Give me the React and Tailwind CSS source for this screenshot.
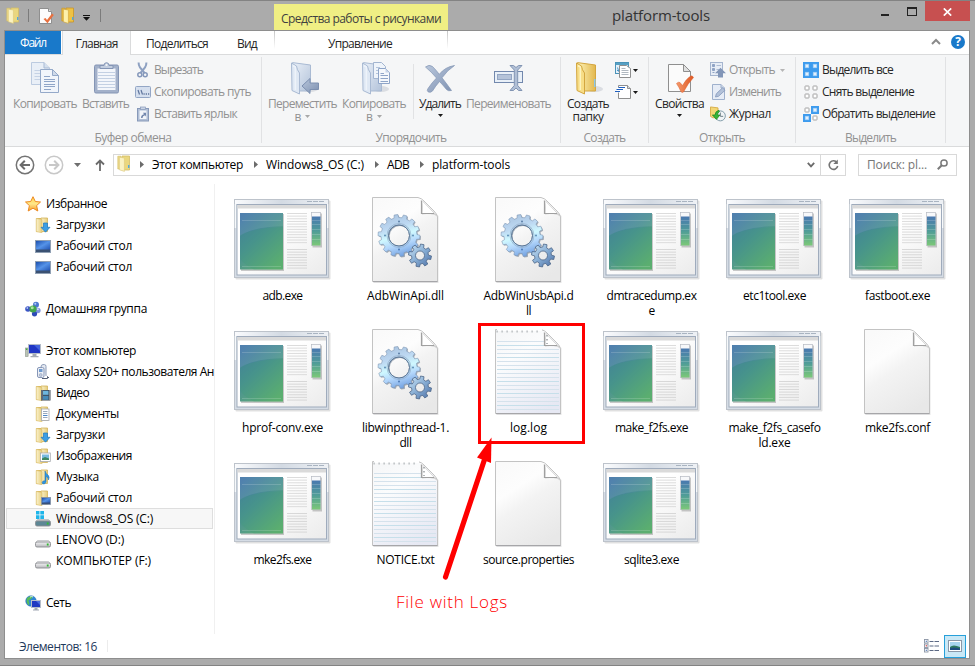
import { useLayoutEffect, useRef, useState } from "react";

/* Single-line text whose tracking is adjusted so that it spans `w` pixels. */
function T({ w, className = "", children }) {
  const ref = useRef(null);
  const [ls, setLs] = useState(0);
  useLayoutEffect(() => {
    if (!w) return;
    const natural = ref.current.getBoundingClientRect().width;
    setLs((w - natural) / String(children).length);
  }, []);
  return (
    <span ref={ref} className={"inline-block whitespace-nowrap " + className} style={{ letterSpacing: ls + "px" }}>
      {children}
    </span>
  );
}

/* ---------- icons ---------- */
function Defs() {
  return (
    <svg width="0" height="0" className="absolute">
      <defs>
        <linearGradient id="fold" x1="0" y1="0" x2="1" y2="0">
          <stop offset="0" stopColor="#fdf3b8" /><stop offset="1" stopColor="#e3b84e" />
        </linearGradient>
        <linearGradient id="foldPale" x1="0" y1="0" x2="1" y2="0">
          <stop offset="0" stopColor="#fbf3cf" /><stop offset="1" stopColor="#e6cd7c" />
        </linearGradient>
        <linearGradient id="foldBlue" x1="0" y1="0" x2="1" y2="1">
          <stop offset="0" stopColor="#eaf0f8" /><stop offset="1" stopColor="#b3c3da" />
        </linearGradient>
        <linearGradient id="steel" x1="0" y1="0" x2="1" y2="1">
          <stop offset="0" stopColor="#b9c7dc" /><stop offset="1" stopColor="#7d90b0" />
        </linearGradient>
        <linearGradient id="exeMain" x1="0.1" y1="0" x2="0.8" y2="1">
          <stop offset="0" stopColor="#4276a8" /><stop offset="0.45" stopColor="#4b9193" /><stop offset="1" stopColor="#66b56e" />
        </linearGradient>
        <linearGradient id="exeBar" x1="0" y1="0" x2="0" y2="1">
          <stop offset="0" stopColor="#4a78b0" /><stop offset="0.5" stopColor="#4f9c98" /><stop offset="1" stopColor="#7cc878" />
        </linearGradient>
        <linearGradient id="exeBg" x1="0" y1="0" x2="1" y2="1">
          <stop offset="0.4" stopColor="#ffffff" /><stop offset="1" stopColor="#ebebeb" />
        </linearGradient>
        <linearGradient id="exeFrame" x1="0" y1="0" x2="1" y2="0">
          <stop offset="0" stopColor="#fafbfd" /><stop offset="0.5" stopColor="#d3dae3" /><stop offset="1" stopColor="#eef1f5" />
        </linearGradient>
        <linearGradient id="page" x1="0.2" y1="0" x2="0.7" y2="1">
          <stop offset="0" stopColor="#fafafa" /><stop offset="0.3" stopColor="#fdfdfd" /><stop offset="0.5" stopColor="#f3f3f3" /><stop offset="1" stopColor="#e8e8e8" />
        </linearGradient>
        <linearGradient id="note" x1="0.2" y1="0" x2="0.7" y2="1">
          <stop offset="0" stopColor="#f6f7f8" /><stop offset="0.3" stopColor="#fbfcfd" /><stop offset="1" stopColor="#e6e8f3" />
        </linearGradient>
        <linearGradient id="gearA" x1="0.3" y1="0" x2="0.6" y2="1">
          <stop offset="0" stopColor="#aac4e0" /><stop offset="0.3" stopColor="#bdd8f2" /><stop offset="0.52" stopColor="#cff8ff" /><stop offset="0.72" stopColor="#b3d6fb" /><stop offset="1" stopColor="#6f9fe0" />
        </linearGradient>
        <linearGradient id="gearB" x1="0" y1="0" x2="1" y2="1">
          <stop offset="0" stopColor="#cfe8f8" /><stop offset="0.5" stopColor="#86acd3" /><stop offset="1" stopColor="#4c6fa5" />
        </linearGradient>
        <linearGradient id="screen" x1="0" y1="0" x2="1" y2="1">
          <stop offset="0" stopColor="#1c4fae" /><stop offset="0.5" stopColor="#5593e8" /><stop offset="1" stopColor="#2355b4" />
        </linearGradient>
        <linearGradient id="star" x1="0" y1="0" x2="0" y2="1">
          <stop offset="0" stopColor="#ffd24a" /><stop offset="0.5" stopColor="#ffe88a" /><stop offset="1" stopColor="#f79a2a" />
        </linearGradient>
        <linearGradient id="drive" x1="0" y1="0" x2="0" y2="1">
          <stop offset="0" stopColor="#f4f4f6" /><stop offset="1" stopColor="#b6b6ba" />
        </linearGradient>
        <linearGradient id="check" x1="0" y1="0" x2="1" y2="0">
          <stop offset="0" stopColor="#f59a6c" /><stop offset="1" stopColor="#dd5722" />
        </linearGradient>
      </defs>
    </svg>
  );
}

const FolderSmall = ({ children }) => (
  <svg width="16" height="16" viewBox="0 0 16 16" className="shrink-0">
    <path d="M1.5 1.5 H7 V14.5 H1.5z" fill="#f3dd93" stroke="#d9b960" />
    <path d="M6 1 H12.5 V14.5 H6z" fill="url(#foldPale)" stroke="#d3b259" strokeWidth="0.8" />
    <path d="M1.2 1.5 L7 2.5 V15.8 L1.2 14.6z" fill="url(#foldPale)" stroke="#dcc06c" strokeWidth="0.6" />
    {children}
  </svg>
);
const FolderTiny = ({ pale }) => (
  <svg width="14" height="17" viewBox="0 0 14 17" className="shrink-0">
    <path d="M5 1 H12.5 V15 H5z" fill={pale ? "#ead77f" : "#eec245"} stroke={pale ? "#d3bd67" : "#c8952a"} strokeWidth="0.8" />
    <path d="M0.8 1.2 H4 V14 H0.8z" fill={pale ? "#ecd98a" : "#e8b93d"} stroke={pale ? "#d3bd67" : "#c8952a"} strokeWidth="0.6" />
    <path d="M2.4 2.2 L7.4 3 V16.4 L2.4 14.8z" fill={pale ? "#faf2c3" : "#fdf0ab"} stroke={pale ? "#dcc877" : "#d0a23a"} strokeWidth="0.6" />
    <rect x="11" y="10" width="1.4" height="3" fill="#54a8e0" />
  </svg>
);
const TinyProps = () => (
  <svg width="15" height="16" viewBox="0 0 15 16" className="shrink-0">
    <path d="M0.5 0.5 H9.5 L12.5 3.5 V15.5 H0.5z" fill="#fcfcfc" stroke="#8f8f8f" />
    <path d="M9.5 0.5 V3.5 H12.5" fill="#ddd" stroke="#8f8f8f" />
    <path d="M4.5 11 L6.5 10 L8 12 L13 5.5 L14.8 7 L8.5 15.2z" fill="#e8703f" />
  </svg>
);
const Caret = ({ c = "#1a1a1a", className = "" }) => (
  <svg width="5" height="3" viewBox="0 0 5 3" className={"shrink-0 " + className}><path d="M0 0 H5 L2.5 3z" fill={c} /></svg>
);

const CopyBig = () => (
  <svg width="32" height="32" viewBox="0 0 32 32">
    <g stroke="#a9bbd5" fill="#f1f5fb">
      <path d="M2.5 0.5 H15 L20.5 6 V22.5 H2.5z" fill="#e9eff7" stroke="#bccbe0" />
      <path d="M15 0.5 V6 H20.5" fill="#d5e0ee" />
      <g stroke="#c5d2e5"><path d="M5.5 8.5 H11 M5.5 11.5 H11 M5.5 14.5 H11 M5.5 17.5 H11" /></g>
      <path d="M11.5 7.5 H23.5 L29.5 13.5 V30.5 H11.5z" stroke="#94a9c9" />
      <path d="M23.5 7.5 V13.5 H29.5z" fill="#cfdaea" stroke="#94a9c9" />
      <path d="M15 14.5 H21 M15 17.5 H26 M15 19.5 H26 M15 22.5 H26 M15 24.5 H26 M15 27.5 H22" stroke="#8fa5c8" />
    </g>
  </svg>
);
const PasteBig = () => (
  <svg width="32" height="32" viewBox="0 0 32 32">
    <rect x="4.5" y="3" width="24" height="28" rx="1.5" fill="#a3b1ca" stroke="#8495b5" />
    <rect x="7.5" y="6.5" width="18" height="21.5" fill="#f3f6fb" />
    <path d="M8 10.5 H25 M8 13.5 H25 M8 16.5 H25 M8 19.5 H25 M8 22.5 H25 M8 25.5 H25" stroke="#c3d0e3" />
    <path d="M10 6.5 V3.5 H14 Q14 0.7 16.5 0.7 T19 3.5 H23 V6.5z" fill="#c2cddf" stroke="#8495b5" />
    <circle cx="16.5" cy="3" r="1" fill="#f5f6f7" />
  </svg>
);
const BigFolder = ({ fill = "url(#foldBlue)", stroke = "#a9bad3", front = "#dfe8f4", hi = "#eef3fa", children }) => (
  <svg width="32" height="34" viewBox="0 0 32 34">
    <ellipse cx="23" cy="27" rx="8" ry="3" fill="#8a95a5" opacity="0.25" />
    <path d="M5.5 0.6 L23.5 3 V29 H9z" fill={fill} stroke={stroke} />
    <path d="M4.5 1 L9.5 4 Q10 8 12.5 11 V32 L5 28.5z" fill={front} stroke={stroke} />
    <path d="M6 3.5 L8.300 5 V28" stroke={hi} strokeWidth="1.5" fill="none" />
    {children}
  </svg>
);
const MoveBig = () => (
  <BigFolder><path d="M15 24 L23 16.500 V21 H31.500 V27.500 H23 V31.500z" fill="url(#steel)" stroke="#7d90b0" /></BigFolder>
);
const CopyToBig = () => (
  <BigFolder>
    <path d="M15.500 0.500 H23.500 L27.500 4.500 V16.500 H15.500z" fill="#eff4fa" stroke="#a3b5d0" />
    <path d="M18 5.500 H22 M18 8.500 H20 M18 11.500 H20" stroke="#b5c5dc" />
    <path d="M20.500 6.500 H27.500 L31.500 10.500 V21.500 H20.500z" fill="#f5f8fc" stroke="#8fa5c8" />
    <path d="M27.500 6.500 V10.500 H31.500z" fill="#c7d4e8" />
    <path d="M22.500 11.500 H26 M22.500 13.500 H30 M22.500 16.500 H30 M22.500 19.500 H30" stroke="#8fa5c8" />
  </BigFolder>
);
const DeleteBig = () => (
  <svg width="32" height="32" viewBox="0 0 32 32">
    <path d="M1.5 5 Q5 2 8.5 4.5 Q12 8 15.3 12.3 Q21 5 30.5 3.5 Q23 8.500 18 15.800 Q22.500 21.500 27.500 28.500 Q24.500 29.500 22.500 27.500 Q18.500 22.500 15.500 19.500 Q11.500 24 8.500 29 Q6.500 31.200 4 29.800 Q2.500 28.500 4 26.500 Q8 20.500 12.500 16 Q7.500 10 1.500 5z" fill="url(#steel)" stroke="#8295b3" strokeWidth="0.7" />
  </svg>
);
const RenameBig = () => (
  <svg width="32" height="32" viewBox="0 0 32 32">
    <rect x="1.500" y="9.500" width="28" height="11" fill="#e9f0f8" stroke="#7288ad" />
    <rect x="4.500" y="12.500" width="14" height="5" fill="#b5c3d9" stroke="#93a6c4" />
    <path d="M17 3.500 H20.500 L23 5.500 L25.500 3.500 H29 L24.700 8 V23.500 L29 28.500 H25.500 L23 26 L20.500 28.500 H17 L21.300 23.500 V8z" fill="#b0bfd6" stroke="#8295b3" />
  </svg>
);
const NewFolderBig = () => <BigFolder fill="url(#fold)" stroke="#d3a640" front="#f7dd86" hi="#fdf3c0"><rect x="22" y="17" width="1.500" height="8" fill="#8cc6e8" /></BigFolder>;
const PropsBig = () => (
  <svg width="32" height="32" viewBox="0 0 32 32">
    <path d="M4.500 2.500 H19.500 L26.500 9.500 V29.500 H4.500z" fill="#fbfbfb" stroke="#8f8f8f" />
    <path d="M19.500 2.500 V9.500 H26.500z" fill="#e0e0e0" stroke="#8f8f8f" />
    <path d="M12.500 21.500 Q14.500 19.500 16 20.500 L18.500 23.500 Q22 17 27 13.800 Q29 14 29.500 15.500 Q23.500 22 19.500 30 Q18.500 31 17 29.800 Q15 25 12.500 21.500z" fill="url(#check)" stroke="#dd6030" strokeWidth="0.500" />
  </svg>
);

const Cut = () => (
  <svg width="16" height="16" viewBox="0 0 16 16"><path d="M3.600 0.500 Q3.500 3 5 5.500 L9.500 11 M11.400 0.500 Q11.500 3 10 5.500 L5.500 11" stroke="#8ea1c2" strokeWidth="2" fill="none" />
    <circle cx="4.800" cy="12.800" r="2" fill="none" stroke="#8598bb" strokeWidth="1.500" /><circle cx="10.200" cy="12.800" r="2" fill="none" stroke="#8598bb" strokeWidth="1.500" /></svg>
);
const CopyPath = () => (
  <svg width="16" height="16" viewBox="0 0 16 16"><rect x="0.500" y="2.500" width="15" height="11" rx="1" fill="#d5dfee" stroke="#93a6c5" /><path d="M3 6 L4.500 10.500 M6 6 L7.500 10.500" stroke="#5f759d" strokeWidth="1.200" /><path d="M8.500 10 H9.700 M10.700 10 H12 M13 10 H14.200" stroke="#5f759d" strokeWidth="1.300" /></svg>
);
const PasteLink = () => (
  <svg width="16" height="16" viewBox="0 0 16 16"><rect x="2.500" y="2.500" width="11" height="12.500" fill="#b1bfd6" stroke="#8799b9" /><rect x="4.500" y="4.500" width="7" height="8.500" fill="#f2f5fa" /><rect x="5.500" y="1" width="5" height="2.500" fill="#c9d3e3" stroke="#8799b9" strokeWidth="0.700" /><path d="M6 12 Q6 9 9 8.300 L8 6.800 H11 V10.500 L10 9.300 Q7.500 10 7.500 12z" fill="#7388ae" /></svg>
);
const NewItem = () => (
  <svg width="16" height="16" viewBox="0 0 16 16"><rect x="0.500" y="0.500" width="13" height="11" fill="#e5f1fa" stroke="#4a93b8" /><path d="M1 1 H13.500 V3 H1z" fill="#57a0c4" /><path d="M2.500 5.500 L4 10 M2 8.500 H4" stroke="#4f9acb" /><path d="M4.500 3.500 H11.500 L15.500 6.500 V15.500 H4.500z" fill="#fff" stroke="#8f8f8f" /><path d="M6.500 6.500 H10.500 M6.500 8.500 H13.500 M6.500 10.500 H13.500 M6.500 12.500 H13.500" stroke="#b0b8c0" /></svg>
);
const EasyAccess = () => (
  <svg width="16" height="16" viewBox="0 0 16 16"><path d="M3.500 1.500 H12.500 L15.500 4.500 V14.500 H3.500z" fill="#fff" stroke="#8f8f8f" /><path d="M12.500 1.500 V4.500 H15.500" fill="#ddd" stroke="#8f8f8f" /><rect x="2" y="3.500" width="3" height="5" fill="#fff" /><path d="M3.500 3.500 H10 M1.500 5.500 H8 M0 7.500 H5" stroke="#1f5fbf" strokeWidth="1.200" /></svg>
);
const OpenIcon = () => (
  <svg width="16" height="16" viewBox="0 0 16 16"><rect x="0.500" y="0.500" width="12" height="13" fill="#e7edf6" stroke="#a5b5cf" /><path d="M2.500 2.500 H4.500 V4.500 H2.500z M2.500 6.500 H4.500 V8.500 H2.500z M2.500 10.500 H4.500" fill="#8fa3c4" stroke="#8fa3c4" /><path d="M6.500 3.500 H11 M6.500 7.500 H9" stroke="#aebcd4" /><path d="M10.500 5.800 L16 11.300 H13 V15.500 H8 V11.300 H5z" fill="#8296b8" /></svg>
);
const EditIcon = () => (
  <svg width="16" height="16" viewBox="0 0 16 16"><path d="M2.500 0.500 H11 L14.500 4 V15.500 H2.500z" fill="#e6ecf6" stroke="#9fb1cd" /><path d="M11 0.500 V4 H14.500" fill="#cbd6e7" stroke="#9fb1cd" /><path d="M5.500 13 L6.300 9.800 L12.500 3.800 L15 6.300 L8.500 12.300z" fill="#b2c1d9" stroke="#8397ba" strokeWidth="0.800" /></svg>
);
const HistoryIcon = () => (
  <svg width="17" height="16" viewBox="0 0 17 16"><path d="M0.500 0.500 L8.500 1.500 V12 H3 L0.500 10.500z" fill="#f3d775" stroke="#d6ad47" /><circle cx="11" cy="10" r="5.300" fill="#f0f4f6" stroke="#7c98a5" /><path d="M11 6.500 V10.500 H14" stroke="#6a7c85" fill="none" /><path d="M9.500 4 Q5.500 5 5.300 9 H2.500 L6.800 13.800 L10.500 9 H8 Q8 6.500 10 5.500z" fill="#37b437" stroke="#178317" strokeWidth="0.700" /></svg>
);
const Sel = ({ on }) => {
  const boxes = [[0.500, 0.500], [8.500, 0.500], [0.500, 8.500], [8.500, 8.500]];
  return (
    <svg width="16" height="16" viewBox="0 0 16 16">
      {boxes.map(([x, y], i) => on[i]
        ? <g key={i}><rect x={x - 0.500} y={y - 0.500} width="8" height="8" fill="#3d9bee" /><rect x={x + 1.700} y={y + 1.700} width="3.600" height="3.600" fill="#e3f0fc" stroke="#9ccbf6" strokeWidth="0.600" /></g>
        : <rect key={i} x={x + 1.500} y={y + 1.500} width="4" height="4" rx="0.500" fill="#fff" stroke="#a2a2a2" />)}
    </svg>
  );
};

const Star = () => <svg width="16" height="16" viewBox="0 0 16 16"><path d="M8 0.700 L10.300 5.500 L15.500 6 L11.600 9.600 L12.800 15 L8 12.200 L3.200 15 L4.400 9.600 L0.500 6 L5.700 5.500z" fill="url(#star)" stroke="#ec8a23" /></svg>;
const Desk = () => <svg width="16" height="16" viewBox="0 0 16 16"><rect x="0.500" y="2.500" width="15" height="12" fill="#3b5172" stroke="#8f9fb3" /><rect x="1" y="3" width="14" height="8.500" fill="url(#screen)" /></svg>;
const Home = () => (
  <svg width="16" height="16" viewBox="0 0 16 16"><circle cx="11" cy="3.800" r="3" fill="#4b77d0" /><circle cx="3" cy="8" r="2.800" fill="#3b55c5" /><circle cx="12.800" cy="9.500" r="2.800" fill="#7d93dd" /><circle cx="9.500" cy="12.800" r="2.600" fill="#2d4bb8" /><circle cx="8" cy="8" r="3.600" fill="#43a64c" /><circle cx="7.200" cy="6.800" r="1.500" fill="#a8e39c" /><circle cx="10.300" cy="2.800" r="1" fill="#b7cef5" /><circle cx="2.300" cy="7" r="0.900" fill="#b2c2f5" /><circle cx="12.800" cy="8.300" r="1" fill="#cfd9f8" /></svg>
);
const Pc = () => (
  <svg width="16" height="16" viewBox="0 0 16 16"><rect x="0.500" y="5" width="2.600" height="8.500" fill="#b9c3b5" stroke="#8d948b" strokeWidth="0.600" /><rect x="1.100" y="5.500" width="1.200" height="1.500" fill="#34b034" /><rect x="3.500" y="1.500" width="12" height="9" fill="#2036c4" stroke="#b4bcc7" /><path d="M9 2 H15 V8z" fill="#5b83ec" opacity="0.600" /><path d="M7.500 11 H11.500 V13 H13.500 V14.300 H5.500 V13 H7.500z" fill="#a3a9b3" /></svg>
);
const Phone = () => (
  <svg width="16" height="16" viewBox="0 0 16 16"><path d="M6 3 Q6 0.600 8 0.600 H9.500 Q11 0.600 11 2.500 V12" fill="#e6eaf2" stroke="#8d9cb8" /><rect x="2.500" y="3.500" width="6.500" height="10" rx="1.500" fill="#edf0f6" stroke="#8797b7" /><rect x="4" y="5" width="3.500" height="3" fill="#6f9bd0" /><circle cx="5.700" cy="11" r="1.500" fill="#c3cde0" stroke="#8d9cb8" strokeWidth="0.600" /><path d="M7 14.500 H12.500 V12.500 L14 14" stroke="#555e73" fill="none" /></svg>
);
const FDown = () => <FolderSmall><path d="M8.500 6 H12.500 V10.300 H15 L10.500 15.200 L6 10.300 H8.500z" fill="#3b9ee5" stroke="#1f78bd" strokeWidth="0.700" /></FolderSmall>;
const FVideo = () => <FolderSmall><rect x="6" y="5" width="9.500" height="10.500" fill="#3d4653" /><rect x="8" y="5.800" width="5.500" height="4" fill="#6db6de" /><rect x="8" y="10.800" width="5.500" height="4" fill="#458ab8" /><path d="M7 5.500 V15.500 M14.600 5.500 V15.500" stroke="#d5dbe0" strokeDasharray="1 1" /></FolderSmall>;
const FDoc = () => <FolderSmall><rect x="6.500" y="3" width="7.500" height="11.500" fill="#fff" stroke="#a5a9ae" strokeWidth="0.800" /><path d="M8 5.500 H12.500 M8 7.500 H12.500 M8 11.500 H12.500" stroke="#7f93ac" strokeWidth="0.800" /><path d="M8 9.500 H12.500" stroke="#4d86c6" /></FolderSmall>;
const FPic = () => <FolderSmall><rect x="5.500" y="5" width="9.800" height="8.500" fill="#fff" stroke="#a5a9ae" strokeWidth="0.800" /><rect x="7" y="6.500" width="7" height="5.500" fill="#79b9df" /><path d="M7 12 V10.500 L10 9 L14 10.500 V12z" fill="#3c8760" /></FolderSmall>;
const FMusic = () => <FolderSmall><path d="M10 2 Q11 5 13 6 Q15 8 13.500 11 Q13.500 8 11 7.500 V13 Q10.500 15.300 8 15 Q6.300 14 7.800 12.300 Q9 11.500 10 12z" fill="#2e95e2" stroke="#1b71b5" strokeWidth="0.500" /></FolderSmall>;
const FDesk = () => <FolderSmall><rect x="6.500" y="7.500" width="9" height="7" fill="#37507a" stroke="#8493a8" strokeWidth="0.800" /><rect x="7.200" y="8" width="7.800" height="4.500" fill="url(#screen)" /></FolderSmall>;
const Drive = ({ win }) => (
  <svg width="16" height="16" viewBox="0 0 16 16">
    {win && <path d="M1 0 H4.500 V3.500 H1z M5.300 0 H9 V3.500 H5.300z M1 4.300 H4.500 V8 H1z M5.300 4.300 H9 V8 H5.300z" fill="#1fb5ea" />}
    <path d="M2.500 8.500 H13.500 L15.500 10.500 H0.500z" fill={win ? "#c9cdd2" : "#e6e6e8"} stroke="#a5a7aa" strokeWidth="0.500" />
    <rect x="0.500" y="10" width="15" height="5" rx="1.500" fill={win ? "#5d8795" : "url(#drive)"} stroke="#8b8d91" strokeWidth="0.900" />
    <rect x="11.800" y="11.500" width="1.800" height="2" fill="#31bb31" />
  </svg>
);
const Net = () => (
  <svg width="16" height="16" viewBox="0 0 16 16"><circle cx="6" cy="6" r="5.300" fill="#2e86d5" stroke="#2a6cae" strokeWidth="0.500" /><path d="M2 3 Q5 0.500 8 1.500 Q6 5 3.500 5.500 Q5 8 4 10.500 Q0.500 8 2 3z" fill="#58bd58" /><path d="M5 2 Q7 1 8 2" stroke="#d5f3e0" fill="none" /><rect x="6.500" y="5.500" width="9" height="7" fill="#1f38c2" stroke="#b5bdca" /><path d="M11 6 H15 V10z" fill="#6a91ef" opacity="0.600" /><path d="M9.500 13 H12.500 V14.500 H14 V15.500 H8 V14.500 H9.500z" fill="#a1a8b3" /></svg>
);

/* ---------- large file icons ---------- */
const ExeIcon = () => (
  <svg width="97" height="81" viewBox="0 0 97 81">
    <rect x="1.500" y="1.500" width="95" height="79" rx="1" fill="#000" opacity="0.120" />
    <rect x="0.500" y="0.500" width="94" height="78" fill="#d5dce5" stroke="#bdc3cb" />
    <rect x="1" y="1" width="93" height="4" fill="url(#exeFrame)" />
    <path d="M1.500 5 V29 M93.500 5 V29" stroke="#f7f9fb" strokeWidth="1.500" />
    <path d="M73 2.500 H91" stroke="#a9b4c1" strokeDasharray="5 1" />
    <rect x="3" y="5.500" width="89.500" height="70.500" fill="url(#exeBg)" stroke="#9fabbc" />
    <rect x="3.500" y="6" width="88.500" height="3.500" fill="#dadada" />
    <rect x="7" y="15" width="43" height="57" fill="#000" opacity="0.200" />
    <rect x="6" y="14" width="43" height="56.500" fill="url(#exeMain)" />
    <path d="M6 37 Q18 28 49 27 V14 H6z" fill="#fff" opacity="0.080" />
    <path d="M6 36.500 Q18 29 49 28 V70.500 H20 Q8 64 6 59z" fill="#3b9a72" opacity="0.250" />
    <path d="M8 21.500 H47 M8 67.500 H47" stroke="#fff" opacity="0.160" />
    {Array.from({ length: 12 }, (_, i) => <path key={i} d={`M53 ${14.5 + i * 2.65} H73`} stroke="#d8d8d8" strokeWidth="0.900" />)}
    {Array.from({ length: 8 }, (_, i) => <path key={i} d={`M53 ${50.5 + i * 2.65} H73`} stroke="#d4d4d4" strokeWidth="0.900" />)}
    <rect x="78.500" y="14.500" width="9.500" height="34" fill="#000" opacity="0.200" />
    <rect x="77.500" y="13.500" width="9" height="33" fill="#f7f8fa" stroke="#b5bac2" strokeWidth="0.700" />
    <rect x="78" y="17.500" width="8.500" height="29" fill="url(#exeBar)" />
    <path d="M78 21.500 H86.500 M78 25.500 H86.500 M78 30.500 H86.500 M78 35.500 H86.500 M78 40.500 H86.500" stroke="#fff" opacity="0.180" />
  </svg>
);

function gearPath(cx, cy, rOut, rIn, teeth, rot) {
  const pts = [];
  const step = (Math.PI * 2) / teeth;
  for (let i = 0; i < teeth; i++) {
    const a = i * step + rot;
    [[-0.3, rIn], [-0.2, rOut], [0.2, rOut], [0.3, rIn]].forEach(([f, r]) => {
      pts.push(`${(cx + Math.cos(a + f * step) * r).toFixed(2)} ${(cy + Math.sin(a + f * step) * r).toFixed(2)}`);
    });
  }
  return "M" + pts.join("L") + "z";
}
const hole = (cx, cy, r) => `M${cx - r} ${cy}a${r} ${r} 0 1 0 ${2 * r} 0a${r} ${r} 0 1 0 ${-2 * r} 0z`;

const PageIcon = ({ kind }) => (
  <svg width="68" height="87" viewBox="0 0 68 87">
    <path d="M1.500 1.500 H48 L66.500 19 V86 H1.500z" fill="#000" opacity="0.100" />
    <path d="M0.500 0.500 H46 Q50 1.500 52 4 L62 14 Q65 17 65.500 20 V84.500 H0.500z" fill={kind === "txt" ? "url(#note)" : "url(#page)"} stroke="#c3c3c3" />
    <path d="M1 84.600 H65.500" stroke="#a3a3a6" />
    {kind === "txt" && <>
      <path d="M2 1 H47" stroke="#fff" strokeWidth="2" />
      <path d="M1.500 2.500 H46" stroke="#b0b4b7" strokeWidth="2" strokeDasharray="1.200 3.800" />
      {Array.from({ length: 18 }, (_, i) => <path key={i} d={`M2 ${12.5 + i * 4} H${i < 2 ? 49 : 64}`} stroke={i % 3 === 1 ? "#c6dfea" : "#d5e2ec"} strokeWidth="1" />)}
    </>}
    <path d="M49 3.500 Q51 6 50 17 Q60 15.500 64.500 18.500 L50 3.500z" fill="#fff" stroke="#c9c9c9" strokeWidth="0.800" />
    <path d="M49.500 4 V16.500 H62" fill="none" stroke="#a0a0a0" strokeWidth="1.200" />
    {kind === "txt" && <path d="M52 6 V15" stroke="#9a9fa3" strokeWidth="1.500" strokeDasharray="1.500 2.500" />}
    {kind === "dll" && <>
      <path d={gearPath(28, 39.5, 21, 18, 14, 0.08) + hole(28, 39.5, 10.5)} fillRule="evenodd" fill="#33475f" opacity="0.400" />
      <path d={gearPath(27, 38.5, 21, 18, 14, 0.08) + hole(27, 38.5, 10.5)} fillRule="evenodd" fill="url(#gearA)" stroke="#8097b3" strokeWidth="0.600" strokeLinejoin="round" />
      <circle cx="27" cy="38.500" r="10.500" fill="none" stroke="#5e7896" strokeWidth="1" />
      <circle cx="27" cy="38.500" r="12" fill="none" stroke="#8aa3bd" strokeWidth="0.600" />
      <circle cx="27" cy="24.500" r="1" fill="#5d7fa5" /><circle cx="27" cy="52.500" r="1" fill="#4e79b5" /><circle cx="13" cy="38.500" r="1" fill="#5d8fb5" /><circle cx="41" cy="38.500" r="1" fill="#5d8fb5" />
      <path d={gearPath(48, 58.5, 11.5, 8.5, 8, 0.2) + hole(48, 58.5, 4.5)} fillRule="evenodd" fill="url(#gearB)" stroke="#4d6688" strokeWidth="0.800" strokeLinejoin="round" />
    </>}
  </svg>
);

/* ---------- ribbon ---------- */
const Big = ({ icon, label, second, w, sep, dis, arrow }) => (
  <div className={"flex shrink-0 flex-col items-center " + (dis ? "text-[#929292]" : "text-[#262626]")}>
    <div className="flex h-[35px] items-start">{icon}</div>
    <T w={w} className="h-[13px] leading-[13px]">{label}</T>
    <div className="flex h-[13px] items-center justify-center gap-1 leading-[13px]">
      {second && <T w={w && second.length > 1 ? 31 : 0}>{second}</T>}
      {arrow && <Caret c={dis ? "#a8a8a8" : "#1a1a1a"} className={second ? "" : "-mt-0.5"} />}
    </div>
  </div>
);
const Small = ({ icon, label, w, dis, arrow }) => (
  <div className={"flex h-[22px] items-center gap-[3px] " + (dis ? "text-[#929292]" : "text-[#262626]")}>
    <span className="flex w-4 shrink-0">{icon}</span>
    {label && <T w={w} className="leading-4">{label}</T>}
    {arrow && <Caret c={dis ? "#b5b5b5" : "#1a1a1a"} className={label ? "ml-0.5" : "-ml-px"} />}
  </div>
);
const Group = ({ title, tw, className, children }) => (
  <div className={"flex h-[91px] shrink-0 flex-col " + className}>
    <div className="flex h-[75px] pt-[7px]">{children}</div>
    <div className="flex h-4 justify-center leading-4 text-[#929292]"><T w={tw}>{title}</T></div>
  </div>
);
const Sep = () => <div className="mt-0.5 h-[86px] w-px shrink-0 bg-[#e1e2e4]" />;

function Ribbon() {
  return (
    <div className="flex h-[92px] shrink-0 border-b border-[#dadbdc] bg-[#f5f6f7]">
      <Group title="Буфер обмена" tw={77} className="w-64">
        <div className="ml-2 flex gap-[5px]">
          <Big icon={<CopyBig />} label="Копировать" w={64} dis />
          <Big icon={<PasteBig />} label="Вставить" w={47} dis />
        </div>
        <div className="-mt-[3px] ml-[6px]">
          <Small icon={<Cut />} label="Вырезать" w={49} dis />
          <Small icon={<CopyPath />} label="Скопировать путь" w={97} dis />
          <Small icon={<PasteLink />} label="Вставить ярлык" w={83} dis />
        </div>
      </Group>
      <Sep />
      <Group title="Упорядочить" tw={71} className="w-[298px]">
        <div className="ml-[6px] flex gap-[5px]">
          <Big icon={<MoveBig />} label="Переместить" second="в" w={69} dis arrow />
          <Big icon={<CopyToBig />} label="Копировать" second="в" w={64} dis arrow />
        </div>
        <div className="ml-[7px] mt-0.5 h-[55px] w-px bg-[#e1e2e4]" />
        <div className="ml-[5px] flex gap-[5px]">
          <Big icon={<DeleteBig />} label="Удалить" w={42} arrow />
          <Big icon={<RenameBig />} label="Переименовать" w={85} dis />
        </div>
      </Group>
      <Sep />
      <Group title="Создать" tw={42} className="w-[87px]">
        <div className="ml-[6px]"><Big icon={<NewFolderBig />} label="Создать" second="папку" w={42} /></div>
        <div className="-mt-[3px] ml-[6px]">
          <Small icon={<NewItem />} arrow />
          <Small icon={<EasyAccess />} arrow />
        </div>
      </Group>
      <Sep />
      <Group title="Открыть" tw={46} className="w-[146px]">
        <div className="ml-[6px]"><Big icon={<PropsBig />} label="Свойства" w={49} arrow /></div>
        <div className="-mt-[3px] ml-[6px]">
          <Small icon={<OpenIcon />} label="Открыть" w={46} dis arrow />
          <Small icon={<EditIcon />} label="Изменить" w={52} dis />
          <Small icon={<HistoryIcon />} label="Журнал" w={42} />
        </div>
      </Group>
      <Sep />
      <Group title="Выделить" tw={51} className="w-[149px]">
        <div className="-mt-[3px] ml-[7px]">
          <Small icon={<Sel on={[1, 1, 1, 1]} />} label="Выделить все" w={71} />
          <Small icon={<Sel on={[0, 0, 0, 0]} />} label="Снять выделение" w={92} />
          <Small icon={<Sel on={[0, 1, 1, 0]} />} label="Обратить выделение" w={113} />
        </div>
      </Group>
      <Sep />
    </div>
  );
}

/* ---------- address ---------- */
const Crumb = ({ children, w }) => (
  <div className="flex items-center">
    <svg width="4" height="7" viewBox="0 0 4 7" className="mr-[8px]"><path d="M0 0 L4 3.500 L0 7z" fill="#6b6b6b" /></svg>
    <T w={w} className="mr-[11px] text-black">{children}</T>
  </div>
);
function AddressBar() {
  return (
    <div className="flex h-[37px] shrink-0 items-center pb-0.5">
      <svg width="20" height="20" viewBox="0 0 20 20" className="ml-[10px]"><circle cx="10" cy="10" r="8.700" fill="none" stroke="#747474" strokeWidth="1.500" /><path d="M15 10 H6 M9.800 5.800 L5.600 10 L9.800 14.200" stroke="#6b6b6b" strokeWidth="2" fill="none" /></svg>
      <svg width="20" height="20" viewBox="0 0 20 20" className="ml-[9px]"><circle cx="10" cy="10" r="8.700" fill="none" stroke="#c8c8c8" strokeWidth="1.500" /><path d="M5 10 H14 M10.200 5.800 L14.400 10 L10.200 14.200" stroke="#c8c8c8" strokeWidth="2" fill="none" /></svg>
      <svg width="7" height="4" viewBox="0 0 7 4" className="ml-[10px]"><path d="M0 0 H7 L3.500 4z" fill="#6f6f6f" /></svg>
      <svg width="10" height="12" viewBox="0 0 10 12" className="ml-[14px]"><path d="M5 12 V2 M1 5.500 L5 1.500 L9 5.500" stroke="#6b6b6b" strokeWidth="1.800" fill="none" /></svg>
      <div className="ml-[8px] flex h-[22px] w-[733px] items-center border border-[#d9d9d9]">
        <div className="ml-[3px] mr-[9px] -mt-0.5"><FolderTiny pale /></div>
        <Crumb w={91}>Этот компьютер</Crumb>
        <Crumb w={98}>Windows8_OS (C:)</Crumb>
        <Crumb w={22}>ADB</Crumb>
        <Crumb w={78}>platform-tools</Crumb>
        <svg width="8" height="6" viewBox="0 0 8 6" className="ml-auto mr-[5px]"><path d="M0.800 0.800 L4 4.400 L7.200 0.800" stroke="#6b6b6b" strokeWidth="1.800" fill="none" /></svg>
        <div className="flex h-full w-[25px] items-center justify-center border-l border-[#d9d9d9]">
          <svg width="11" height="12" viewBox="0 0 11 12"><path d="M9 3.500 A4.300 4.300 0 1 0 9.700 7" stroke="#757575" strokeWidth="1.600" fill="none" /><path d="M9.800 0.500 V5 H5.300z" fill="#757575" /></svg>
        </div>
      </div>
      <div className="ml-3 flex h-[22px] w-[99px] items-center border border-[#d9d9d9] pl-2 text-[#767676]">
        <T w={60}>Поиск: pl...</T>
        <svg width="11" height="11" viewBox="0 0 11 11" className="ml-[10px]"><circle cx="7" cy="4" r="3.100" fill="none" stroke="#7a7a7a" strokeWidth="1.500" /><path d="M4.800 6.200 L0.800 10.200" stroke="#7a7a7a" strokeWidth="2" /></svg>
      </div>
    </div>
  );
}

/* ---------- navigation ---------- */
const nav = [
  [0, Star, "Избранное", 61], [1, FDown, "Загрузки", 49], [1, Desk, "Рабочий стол", 76], [1, Desk, "Рабочий стол", 76],
  null, [0, Home, "Домашняя группа", 101], null, [0, Pc, "Этот компьютер", 90],
  [1, Phone, "Galaxy S20+ пользователя Ан", 158], [1, FVideo, "Видео", 33], [1, FDoc, "Документы", 63], [1, FDown, "Загрузки", 49],
  [1, FPic, "Изображения", 76], [1, FMusic, "Музыка", 43], [1, FDesk, "Рабочий стол", 76],
  [1, () => <Drive win />, "Windows8_OS (C:)", 97], [1, Drive, "LENOVO (D:)", 68], [1, Drive, "КОМПЬЮТЕР (F:)", 95],
  null, [0, Net, "Сеть", 25],
];
function Sidebar() {
  return (
    <div className="w-[209px] shrink-0 overflow-hidden pt-[9px]">
      {nav.map((n, i) => {
        if (!n) return <div key={i} className="h-[21px]" />;
        const [lvl, Icon, label, w] = n;
        const on = label.startsWith("Windows8");
        return (
          <div key={i} className={"ml-px mr-px flex h-[21px] items-center gap-[5px] border " + (lvl ? "pl-[28px] " : "pl-[18px] ") + (on ? "border-[#dedede] bg-[#f7f7f7]" : "border-transparent")}>
            <span className="shrink-0"><Icon /></span>
            <T w={w}>{label}</T>
          </div>
        );
      })}
    </div>
  );
}

/* ---------- files ---------- */
const files = [
  ["exe", ["adb.exe", 40]], ["dll", ["AdbWinApi.dll", 77]], ["dll", ["AdbWinUsbApi.d", 90], ["ll", 5]], ["exe", ["dmtracedump.ex", 90], ["e", 6]], ["exe", ["etc1tool.exe", 63]], ["exe", ["fastboot.exe", 65]],
  ["exe", ["hprof-conv.exe", 81]], ["dll", ["libwinpthread-1.", 87], ["dll", 12]], ["txt", ["log.log", 37]], ["exe", ["make_f2fs.exe", 73]], ["exe", ["make_f2fs_casefo", 92], ["ld.exe", 32]], ["conf", ["mke2fs.conf", 65]],
  ["exe", ["mke2fs.exe", 58]], ["txt", ["NOTICE.txt", 58]], ["conf", ["source.properties", 91]], ["exe", ["sqlite3.exe", 55]],
];
function Files() {
  return (
    <div className="ml-[6px] grid grid-cols-[repeat(6,123px)] auto-rows-[132px] content-start pt-[7px]">
      {files.map(([kind, ...lines], i) => (
        <div key={i} className="flex flex-col items-center">
          <div className={"flex h-[97px] " + (kind === "exe" ? "pt-2" : "pt-[6px]")}>{kind === "exe" ? <ExeIcon /> : <PageIcon kind={kind} />}</div>
          {lines.map(([t, w]) => <T key={t} w={w} className="h-[15px] leading-[15px]">{t}</T>)}
        </div>
      ))}
    </div>
  );
}

export default function App() {
  return (
    <div className="relative flex h-[666px] w-[975px] flex-col overflow-hidden border-y border-[#838383] bg-[#ababab] font-['Open_Sans','Noto_Sans',sans-serif] text-[12px] leading-4 text-black">
      <Defs />
      {/* title bar */}
      <div className="flex h-[29px] shrink-0">
        <div className="ml-[6px] flex w-[268px] items-center">
          <FolderTiny pale />
          <div className="ml-[8px] h-[13px] w-px bg-[#7b7b7b]" />
          <div className="ml-[10px] flex"><TinyProps /></div>
          <div className="ml-[7px] flex"><FolderTiny /></div>
          <svg width="7" height="6" viewBox="0 0 7 6" className="ml-[8px] mt-1"><path d="M0 0 H7 V1 H0z M0 2 H7 L3.500 5.800z" fill="#111" /></svg>
          <div className="ml-[10px] h-[13px] w-px bg-[#7b7b7b]" />
        </div>
        <div className="mt-[3px] flex w-[174px] items-center justify-center bg-[#f0ef84] pt-[3px] text-[#3f3f3f]"><T w={160}>Средства работы с рисунками</T></div>
        <div className="ml-[164px] w-[269px] pt-1 text-[15px] leading-5 text-[#333]"><T w={98}>platform-tools</T></div>
        <div className="flex items-start">
          <div className="mt-[13px] h-[2px] w-2 bg-[#222]" />
          <div className="ml-[18px] mt-[6px] h-[9px] w-[10px] border border-t-2 border-[#222]" />
          <div className="ml-[8px] flex h-5 w-[45px] items-center justify-center bg-[#c75050] pt-px">
            <svg width="9" height="8" viewBox="0 0 9 8"><path d="M0.800 0.400 L8.200 7.600 M8.200 0.400 L0.800 7.600" stroke="#fff" strokeWidth="1.700" /></svg>
          </div>
        </div>
      </div>
      {/* window client area */}
      <div className="ml-1 flex h-[629px] w-[966px] shrink-0 flex-col border border-[#8e8e8e] bg-white">
        <div className="flex h-6 shrink-0 border-b border-[#dadbdc]">
          <div className="flex h-[23px] w-14 items-center justify-center bg-[#1979ca] pt-px text-white"><T w={26}>Файл</T></div>
          <div className="ml-px flex h-6 w-[69px] items-center justify-center border-x border-[#dadbdc] bg-[#f5f6f7] pt-0.5"><T w={42} className="text-[#262626]">Главная</T></div>
          <T w={62} className="ml-[15px] pt-[5px] text-[#262626]">Поделиться</T>
          <T w={20} className="ml-[29px] pt-[5px] text-[#262626]">Вид</T>
          <div className="ml-[17px] flex h-[18px] w-[174px] justify-between">
            <div className="h-full w-px bg-gradient-to-b from-[#c5c5c5] to-white" />
            <T w={64} className="mr-0.5 pt-[5px] text-[#262626]">Управление</T>
            <div className="h-full w-px bg-gradient-to-b from-[#c5c5c5] to-white" />
          </div>
          <svg width="10" height="7" viewBox="0 0 10 7" className="ml-auto mt-[7px]"><path d="M1 6 L5 2 L9 6" stroke="#8a8a8a" strokeWidth="2" fill="none" /></svg>
          <div className="ml-[10px] mr-1 mt-1 flex h-[14px] w-[14px] items-center justify-center rounded-full bg-[#1979ca] text-[12px] font-bold leading-[14px] text-white">?</div>
        </div>
        <Ribbon />
        <AddressBar />
        <div className="flex h-[450px] shrink-0">
          <Sidebar />
          <div className="w-px bg-[#f0f0f0]" />
          <Files />
        </div>
        <div className="flex h-6 items-center text-[#1e395b]">
          <T w={78} className="ml-[14px] pt-0.5">Элементов: 16</T>
          <div className="ml-[10px] h-3 w-px bg-[#ececec]" />
          <svg width="16" height="14" viewBox="0 0 16 14" className="ml-auto">
            {[0.5, 5, 9.500].map((y) => <g key={y}><rect x="0.500" y={y} width="3.500" height="3.500" fill="#fff" stroke="#8a94a5" strokeWidth="0.900" /><rect x="1.700" y={y + 1.200} width="1.200" height="1.200" fill={y === 5 ? "#d03030" : "#4a74b5"} /><path d={`M5.500 ${y + 2} H9.500 M10.500 ${y + 2} H15`} stroke="#5d6a85" /></g>)}
          </svg>
          <div className="ml-1 mr-[3px] flex h-[23px] w-[22px] items-center justify-center border border-[#26a0da] bg-[#c9e8f6]">
            <svg width="14" height="12" viewBox="0 0 14 12"><rect x="0.500" y="0.500" width="13" height="11" fill="#fff" stroke="#8a98a8" /><rect x="2" y="2" width="10" height="8" fill="#a8d5ee" /><path d="M2 7 Q5 4 12 7 V10 H2z" fill="#2f7a5f" /><path d="M2 8 Q7 7 12 8.500 V10 H2z" fill="#1f4d80" /></svg>
          </div>
        </div>
      </div>
      {/* annotations over the window */}
      <div className="absolute left-[478px] top-[322px] h-[121px] w-[107px] border-[3px] border-[#ff0000]" />
      <svg width="60" height="150" viewBox="0 0 60 150" className="absolute left-[437px] top-[432px]">
        <path d="M8.500 144 L49 22" stroke="#ff0000" strokeWidth="5.200" strokeLinecap="round" />
        <path d="M54.500 4.500 L40 24.500 L54 30z" fill="#ff0000" />
      </svg>
      <div className="absolute left-[396px] top-[589px] text-[17px] font-light leading-6 text-[#ff0000]"><T w={112}>File with Logs</T></div>
    </div>
  );
}
